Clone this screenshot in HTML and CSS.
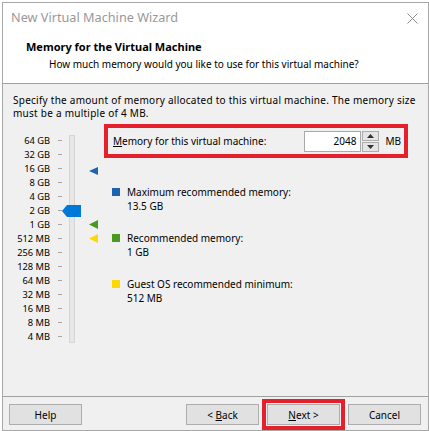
FILE: index.html
```html
<!DOCTYPE html>
<html>
<head>
<meta charset="utf-8">
<link rel="stylesheet" href="styles.css">
</head>
<body>
<div class="window">
  <div class="titlebar">
    <span class="title-text">New Virtual Machine Wizard</span>
    <svg class="close" width="11" height="11" viewBox="0 0 11 11"><path d="M0.5 0.5 L10.5 10.5 M10.5 0.5 L0.5 10.5" stroke="#8a8a8a" stroke-width="1" fill="none"/></svg>
  </div>
  <div class="header">
    <div class="header-title">Memory for the Virtual Machine</div>
    <div class="header-sub">How much memory would you like to use for this virtual machine?</div>
  </div>
  <div class="content">
    <div class="intro">Specify the amount of memory allocated to this virtual machine. The memory size<br>must be a multiple of 4 MB.</div>
    <div class="main">
      <div class="slider">
        <div class="scale">
          <div class="row"><span class="lbl">64 GB</span></div>
          <div class="row"><span class="lbl">32 GB</span></div>
          <div class="row"><span class="lbl">16 GB</span></div>
          <div class="row"><span class="lbl">8 GB</span></div>
          <div class="row"><span class="lbl">4 GB</span></div>
          <div class="row"><span class="lbl">2 GB</span></div>
          <div class="row"><span class="lbl">1 GB</span></div>
          <div class="row"><span class="lbl">512 MB</span></div>
          <div class="row"><span class="lbl">256 MB</span></div>
          <div class="row"><span class="lbl">128 MB</span></div>
          <div class="row"><span class="lbl">64 MB</span></div>
          <div class="row"><span class="lbl">32 MB</span></div>
          <div class="row"><span class="lbl">16 MB</span></div>
          <div class="row"><span class="lbl">8 MB</span></div>
          <div class="row"><span class="lbl">4 MB</span></div>
        </div>
        <div class="track"></div>
        <div class="thumb"></div>
        <div class="tri tri-blue"></div>
        <div class="tri tri-green"></div>
        <div class="tri tri-yellow"></div>
      </div>
      <div class="right">
        <div class="membox">
          <span class="memlabel"><u>M</u>emory for this virtual machine:</span>
          <div class="numinput">2048</div>
          <div class="spinner">
            <div class="spin-btn"><svg width="7" height="4" viewBox="0 0 7 4"><path d="M0 4 L3.5 0 L7 4 Z" fill="#333"/></svg></div>
            <div class="spin-btn"><svg width="7" height="4" viewBox="0 0 7 4"><path d="M0 0 L3.5 4 L7 0 Z" fill="#333"/></svg></div>
          </div>
          <span class="unit">MB</span>
        </div>
        <div class="legend">
          <div class="item">
            <span class="sq sq-blue"></span>
            <div class="item-text"><div>Maximum recommended memory:</div><div>13.5 GB</div></div>
          </div>
          <div class="item">
            <span class="sq sq-green"></span>
            <div class="item-text"><div>Recommended memory:</div><div>1 GB</div></div>
          </div>
          <div class="item">
            <span class="sq sq-yellow"></span>
            <div class="item-text"><div>Guest OS recommended minimum:</div><div>512 MB</div></div>
          </div>
        </div>
      </div>
    </div>
  </div>
  <div class="footer">
    <button class="btn">Help</button>
    <div class="spacer"></div>
    <button class="btn">&lt; <u>B</u>ack</button>
    <button class="btn btn-next"><u>N</u>ext &gt;</button>
    <button class="btn">Cancel</button>
  </div>
</div>
</body>
</html>
```
FILE: styles.css
```css
html, body {
  margin: 0;
  background: #ffffff;
}
body {
  padding: 2px 0 0 2px;
  font-family: "Noto Sans", "Liberation Sans", sans-serif;
  font-size: 10px;
  color: #000;
}
.window {
  box-sizing: border-box;
  width: 427px;
  height: 429px;
  border: 1px solid #a8a8a8;
  background: #f0f0f0;
  display: flex;
  flex-direction: column;
}
.titlebar {
  height: 28px;
  background: #fff;
  display: flex;
  align-items: center;
  padding-left: 8px;
  padding-right: 10px;
}
.title-text {
  font-size: 12.7px;
  color: #999;
  flex: 1;
  white-space: nowrap;
  padding-bottom: 1px;
}
.close {
  display: block;
  margin-top: 2px;
}
.header {
  background: #fff;
  height: 52px;
  border-bottom: 1px solid #a0a0a0;
  box-sizing: content-box;
}
.header-title {
  font-weight: bold;
  font-size: 11px;
  padding-left: 23px;
  padding-top: 9px;
  line-height: 14px;
  white-space: nowrap;
}
.header-sub {
  padding-left: 46px;
  padding-top: 3px;
  line-height: 14px;
  white-space: nowrap;
}
.content {
  flex: 1;
  padding: 10px 10px 0 10px;
}
.intro {
  line-height: 13px;
  white-space: nowrap;
  letter-spacing: 0.25px;
}
.main {
  display: grid;
  grid-template-columns: 91px 304px;
  margin-top: 4px;
}
.slider {
  position: relative;
  display: flex;
  padding-top: 9px;
}
.scale {
  display: flex;
  flex-direction: column;
}
.row {
  height: 14px;
  display: flex;
  align-items: center;
}
.lbl {
  width: 37px;
  text-align: right;
  white-space: nowrap;
  font-size: 9.3px;
}
.row::after {
  content: "";
  width: 4px;
  height: 1px;
  background: #a6a6a6;
  margin-left: 8px;
}
.track {
  width: 4px;
  height: 206px;
  margin-top: 2px;
  margin-left: 7px;
  border: 1px solid #d6d6d6;
  background: #e7e7e7;
}
.thumb {
  position: absolute;
  left: 49px;
  top: 81px;
  width: 19px;
  height: 12px;
  background: #0078d7;
  clip-path: polygon(0 50%, 5px 0, 100% 0, 100% 100%, 5px 100%);
}
.tri {
  position: absolute;
  left: 76px;
  width: 9px;
  height: 9px;
  clip-path: polygon(0 50%, 100% 0, 100% 100%);
}
.tri-blue { top: 43px; height: 8px; background: #1c64b0; }
.tri-green { top: 96px; background: #4a9a22; }
.tri-yellow { top: 110px; background: #ffd800; }
.right {
  display: flex;
  flex-direction: column;
}
.membox {
  box-sizing: border-box;
  height: 34px;
  border: 4px solid #e3202b;
  display: flex;
  align-items: center;
  padding-left: 5px;
  padding-right: 3px;
}
.memlabel {
  flex: 1;
  white-space: nowrap;
}
.numinput {
  box-sizing: border-box;
  width: 57px;
  height: 21px;
  border: 1px solid #a9a9a9;
  background: #fff;
  text-align: right;
  padding-right: 4px;
  line-height: 19px;
}
.spinner {
  width: 17px;
  height: 21px;
  display: flex;
  flex-direction: column;
  margin-left: 1px;
}
.spin-btn {
  box-sizing: border-box;
  height: 10px;
  border: 1px solid #adadad;
  background: #e5e5e5;
  display: flex;
  align-items: center;
  justify-content: center;
}
.spin-btn + .spin-btn {
  margin-top: 1px;
}
.unit {
  margin-left: 6px;
  white-space: nowrap;
}
.legend {
  padding-left: 8px;
}
.item {
  display: flex;
  margin-top: 18px;
  line-height: 14px;
}
.item:first-child {
  margin-top: 27px;
}
.sq {
  width: 8px;
  height: 8px;
  margin-top: 3px;
  margin-right: 7px;
  flex: none;
}
.sq-blue { background: #1c64b0; }
.sq-green { background: #4a9a22; }
.sq-yellow { background: #ffd800; }
.item-text {
  white-space: nowrap;
}
.footer {
  border-top: 1px solid #a0a0a0;
  display: flex;
  align-items: flex-start;
  padding: 7px 7px 0 6px;
  box-sizing: border-box;
  height: 34px;
}
.spacer { flex: 1; }
.btn {
  box-sizing: border-box;
  width: 73px;
  height: 21px;
  border: 1px solid #adadad;
  background: #e1e1e1;
  font-family: inherit;
  font-size: 10px;
  color: #000;
  padding: 0;
  margin: 0;
}
.btn + .btn {
  margin-left: 8px;
}
.btn-next {
  outline: 4px solid #e3202b;
  outline-offset: 1px;
}
```
